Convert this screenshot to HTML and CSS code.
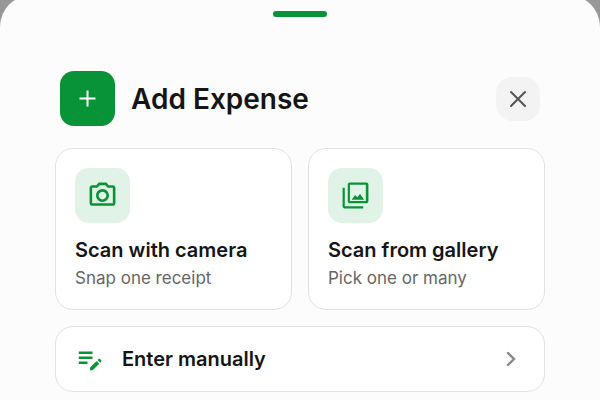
FILE: index.html
```
<!DOCTYPE html>
<html lang="en">
<head>
    <meta charset="UTF-8">
    <meta name="viewport" content="width=device-width, initial-scale=1.0">
    <title>Add Expense</title>
    <link rel="stylesheet" href="styles.css">
</head>
<body>
    <main class="sheet">
        <div class="handle"></div>

        <header class="sheet-header">
            <div class="header-icon">
                <svg width="29" height="29" viewBox="0 0 29 29" fill="none" stroke="currentColor" stroke-width="2">
                    <path d="M14.5 6.5v16M6.5 14.5h16"/>
                </svg>
            </div>
            <h1>Add Expense</h1>
            <button type="button" class="close-btn" aria-label="Close">
                <svg width="30" height="30" viewBox="0 0 30 30" fill="none" stroke="currentColor" stroke-width="2" stroke-linecap="round">
                    <path d="M8 8l14 14M22 8L8 22"/>
                </svg>
            </button>
        </header>

        <div class="options">
            <button type="button" class="card">
                <span class="card-icon">
                    <svg width="31" height="31" viewBox="0 0 24 24" fill="currentColor">
                        <path d="M14.12 4l1.83 2H20v12H4V6h4.05l1.83-2h4.24M15 2H9L7.17 4H4c-1.1 0-2 .9-2 2v12c0 1.1.9 2 2 2h16c1.1 0 2-.9 2-2V6c0-1.1-.9-2-2-2h-3.17L15 2zm-3 7c1.65 0 3 1.35 3 3s-1.35 3-3 3-3-1.35-3-3 1.35-3 3-3m0-2c-2.76 0-5 2.24-5 5s2.24 5 5 5 5-2.24 5-5-2.24-5-5-5z"/>
                    </svg>
                </span>
                <span class="card-title">Scan with camera</span>
                <span class="card-text">Snap one receipt</span>
            </button>
            <button type="button" class="card">
                <span class="card-icon">
                    <svg width="31" height="31" viewBox="0 0 24 24" fill="currentColor">
                        <path d="M20 3.7v12.6H7.7V3.7H20M20.4 2H7.6C6.7 2 6 2.7 6 3.6v12.8c0 .9.7 1.6 1.6 1.6h12.8c.9 0 1.6-.7 1.6-1.6V3.6c0-.9-.7-1.6-1.6-1.6z"/>
                        <path d="M9 15.2l2.7-3.6 1.6 1.8 2.2-2.6 3.2 4.4zM2 6v14.4c0 .9.7 1.6 1.6 1.6H18v-1.7H3.7V6z"/>
                    </svg>
                </span>
                <span class="card-title">Scan from gallery</span>
                <span class="card-text">Pick one or many</span>
            </button>
        </div>

        <button type="button" class="manual">
            <svg class="manual-icon" width="30" height="30" viewBox="0 0 24 24" fill="currentColor">
                <path d="M3 10h11v2H3v-2zm0-2h11V6H3v2zm0 8h7v-2H3v2zm15.01-3.13l.71-.71c.39-.39 1.02-.39 1.41 0l.71.71c.39.39.39 1.02 0 1.41l-.71.71-2.12-2.12zm-.71.71l-5.3 5.3V21h2.12l5.3-5.3-2.12-2.12z"/>
            </svg>
            <span class="manual-label">Enter manually</span>
            <svg class="chevron" width="26" height="26" viewBox="0 0 26 26" fill="none" stroke="currentColor" stroke-width="2.4" stroke-linecap="round">
                <path d="M10 7l6 6-6 6"/>
            </svg>
        </button>
    </main>
</body>
</html>
```
FILE: styles.css
```
* {
    box-sizing: border-box;
}

body {
    font-family: Inter, sans-serif;
    background-color: #989898;
    color: #151515;
    margin: 0;
    overflow: hidden;
}

button {
    font-family: inherit;
    color: inherit;
    cursor: pointer;
}

svg {
    display: block;
    flex-shrink: 0;
}

.sheet {
    background-color: #fcfcfc;
    min-height: calc(100vh + 5px);
    margin-top: -5px;
    padding: 16px 55px 9px;
    border-radius: 32px 32px 0 0;
}

.handle {
    width: 54px;
    height: 6px;
    margin: 0 auto 54px;
    border-radius: 3px;
    background-color: #079336;
}

.sheet-header {
    display: flex;
    align-items: center;
    gap: 16px;
    padding: 0 5px;
    margin-bottom: 22px;
}

.header-icon,
.card-icon {
    display: flex;
    align-items: center;
    justify-content: center;
    width: 55px;
    height: 55px;
    border-radius: 14px;
}

.header-icon {
    background-color: #079336;
    color: white;
}

h1 {
    flex: 1;
    margin: 0;
    font-size: 28px;
    font-weight: 600;
}

.close-btn {
    display: flex;
    align-items: center;
    justify-content: center;
    width: 44px;
    height: 44px;
    padding: 0;
    border: none;
    border-radius: 16px;
    background-color: #f3f3f3;
    color: #555;
}

.options {
    display: grid;
    grid-template-columns: 1fr 1fr;
    gap: 16px;
    margin-bottom: 16px;
}

.card,
.manual {
    background-color: white;
    border: 1px solid #e2e2e2;
    border-radius: 18px;
    text-align: left;
}

.card {
    display: flex;
    flex-direction: column;
    align-items: flex-start;
    padding: 19px;
}

.card-icon {
    background-color: #e1f2e6;
    color: #079336;
    margin-bottom: 14px;
}

.card-title {
    font-size: 20px;
    font-weight: 600;
    line-height: 26px;
    margin-bottom: 4px;
}

.card-text {
    font-size: 17px;
    line-height: 23px;
    color: #666;
}

.manual {
    display: flex;
    align-items: center;
    gap: 17px;
    width: 100%;
    padding: 17px 20px 17px 19px;
}

.manual-icon {
    color: #079336;
}

.manual-label {
    flex: 1;
    font-size: 20px;
    font-weight: 600;
}

.chevron {
    color: #888;
}
```
